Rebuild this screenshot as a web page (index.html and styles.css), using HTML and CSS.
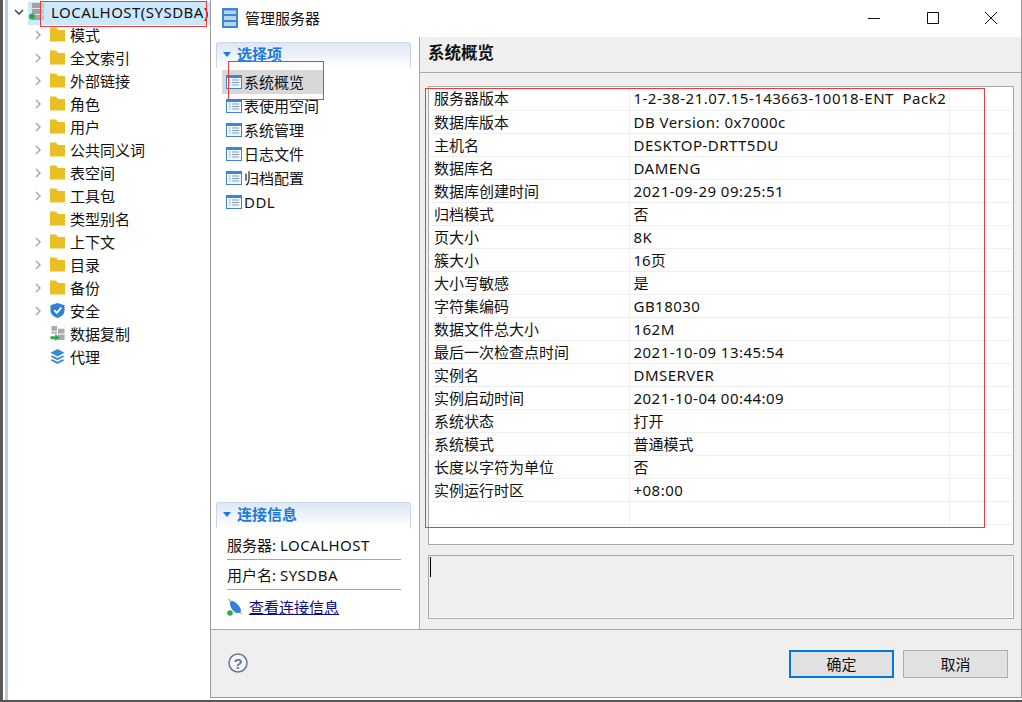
FILE: index.html
```html
<!DOCTYPE html>
<html lang="zh-CN">
<head>
<meta charset="utf-8">
<title>管理服务器</title>
<link rel="stylesheet" href="styles.css">
</head>
<body>
<svg class="defs" width="0" height="0" aria-hidden="true">
  <defs>
    <symbol id="folder" viewBox="0 0 15 14"><path d="M0 0H6L8 2.500H15V14H0Z" fill="#e8c024"/></symbol>
    <symbol id="chev" viewBox="0 0 6 10"><path d="M1 1L5 5L1 9" fill="none" stroke="#a8a8a8" stroke-width="1.500"/></symbol>
    <symbol id="list" viewBox="0 0 16 14"><path d="M0 0H16V14H0Z" fill="#3c87d4"/><path d="M1 3H15V13H1Z" fill="#f4f8fc"/><path d="M3 5H4.500M6 5H13M3 7.500H4.500M6 7.500H13M3 10H4.500M6 10H13" stroke="#7d9cc0" stroke-width="1"/></symbol>
  </defs>
</svg>
<div class="desktop">
  <aside class="tree">
    <div class="tree-row root">
      <svg class="twist-root" width="10" height="6" viewBox="0 0 10 6"><path d="M1 1L5 5L9 1" fill="none" stroke="#444" stroke-width="1.500"/></svg>
      <span class="root-label">
        <svg class="server" width="17" height="18" viewBox="0 0 17 18"><path d="M3 0H15V5H3ZM3 6H15V11H3ZM3 12H15V17H3Z" fill="#a3a3a3"/><path d="M11 0H15V5H11ZM11 6H15V11H11ZM11 12H15V17H11Z" fill="#c4c4c4"/><circle cx="3" cy="13.500" r="3" fill="#2fa84f"/></svg>
        <span class="lat">LOCALHOST(SYSDBA)</span>
      </span>
    </div>
    <div class="tree-row"><svg class="chev"><use href="#chev"/></svg><svg class="ico"><use href="#folder"/></svg><span>模式</span></div>
    <div class="tree-row"><svg class="chev"><use href="#chev"/></svg><svg class="ico"><use href="#folder"/></svg><span>全文索引</span></div>
    <div class="tree-row"><svg class="chev"><use href="#chev"/></svg><svg class="ico"><use href="#folder"/></svg><span>外部链接</span></div>
    <div class="tree-row"><svg class="chev"><use href="#chev"/></svg><svg class="ico"><use href="#folder"/></svg><span>角色</span></div>
    <div class="tree-row"><svg class="chev"><use href="#chev"/></svg><svg class="ico"><use href="#folder"/></svg><span>用户</span></div>
    <div class="tree-row"><svg class="chev"><use href="#chev"/></svg><svg class="ico"><use href="#folder"/></svg><span>公共同义词</span></div>
    <div class="tree-row"><svg class="chev"><use href="#chev"/></svg><svg class="ico"><use href="#folder"/></svg><span>表空间</span></div>
    <div class="tree-row"><svg class="chev"><use href="#chev"/></svg><svg class="ico"><use href="#folder"/></svg><span>工具包</span></div>
    <div class="tree-row"><i class="chev"></i><svg class="ico"><use href="#folder"/></svg><span>类型别名</span></div>
    <div class="tree-row"><svg class="chev"><use href="#chev"/></svg><svg class="ico"><use href="#folder"/></svg><span>上下文</span></div>
    <div class="tree-row"><svg class="chev"><use href="#chev"/></svg><svg class="ico"><use href="#folder"/></svg><span>目录</span></div>
    <div class="tree-row"><svg class="chev"><use href="#chev"/></svg><svg class="ico"><use href="#folder"/></svg><span>备份</span></div>
    <div class="tree-row"><svg class="chev"><use href="#chev"/></svg>
      <svg class="ico" viewBox="0 0 15 16"><path d="M7.500 0L15 2.500V8C15 12 11.500 14.500 7.500 16C3.500 14.500 0 12 0 8V2.500Z" fill="#2f80d8"/><path d="M4 7.500L6.800 10.500L11.500 5" fill="none" stroke="#fff" stroke-width="2"/></svg>
      <span>安全</span></div>
    <div class="tree-row"><i class="chev"></i>
      <svg class="ico" viewBox="0 0 15 16"><path d="M1 0H7V5H1ZM8 3H15V8H8ZM1 6H7V8H1ZM8 9H15V15H8Z" fill="#a9a9a9"/><path d="M0 11H5V8.500L10 12.500L5 16V14H0Z" fill="#2fa84f"/></svg>
      <span>数据复制</span></div>
    <div class="tree-row"><i class="chev"></i>
      <svg class="ico" viewBox="0 0 15 16"><path d="M7.500 0L15 4L7.500 8L0 4Z" fill="#3b8ad8"/><path d="M2 6.800L7.500 9.700L13 6.800L15 8L7.500 12L0 8Z" fill="#3b8ad8"/><path d="M2 10.800L7.500 13.700L13 10.800L15 12L7.500 16L0 12Z" fill="#3b8ad8"/></svg>
      <span>代理</span></div>
  </aside>

  <section class="dialog">
    <header class="titlebar">
      <svg class="title-icon" width="16" height="20" viewBox="0 0 16 20"><path d="M0 0H16V20H0Z" fill="#3c87d4"/><path d="M2 2.500H14V6H2ZM2 8H14V12H2ZM2 14H14V18H2Z" fill="#b9d3ee"/></svg>
      <span class="title-text">管理服务器</span>
      <div class="win-controls">
        <svg class="win-btn" width="12" height="12" viewBox="0 0 12 12"><path d="M0 6.500H12" stroke="#111"/></svg>
        <svg class="win-btn" width="12" height="12" viewBox="0 0 12 12"><path d="M.5 .5H11.500V11.500H.5Z" fill="none" stroke="#111"/></svg>
        <svg class="win-btn" width="12" height="12" viewBox="0 0 12 12"><path d="M0 0L12 12M12 0L0 12" stroke="#111"/></svg>
      </div>
    </header>

    <div class="dialog-body">
      <nav class="sidebar">
        <div class="sect-head">
          <svg class="tri" width="8" height="5" viewBox="0 0 8 5"><path d="M0 0H8L4 5Z" fill="#1a7ae0"/></svg>
          <span>选择项</span>
        </div>
        <ul class="options">
          <li class="option selected"><svg class="list-ico"><use href="#list"/></svg><span>系统概览</span></li>
          <li class="option"><svg class="list-ico"><use href="#list"/></svg><span>表使用空间</span></li>
          <li class="option"><svg class="list-ico"><use href="#list"/></svg><span>系统管理</span></li>
          <li class="option"><svg class="list-ico"><use href="#list"/></svg><span>日志文件</span></li>
          <li class="option"><svg class="list-ico"><use href="#list"/></svg><span>归档配置</span></li>
          <li class="option"><svg class="list-ico"><use href="#list"/></svg><span class="lat">DDL</span></li>
        </ul>
        <div class="sect-head conn-head">
          <svg class="tri" width="8" height="5" viewBox="0 0 8 5"><path d="M0 0H8L4 5Z" fill="#1a7ae0"/></svg>
          <span>连接信息</span>
        </div>
        <div class="conn-line conn-first">服务器: <span class="lat">LOCALHOST</span></div>
        <div class="conn-line">用户名: <span class="lat">SYSDBA</span></div>
        <div class="conn-link">
          <svg width="16" height="17" viewBox="0 0 16 17"><path d="M1 0L5 3M10 12L15 15" stroke="#8fb4d8" stroke-width="1.200"/><path d="M5 2C8 2 14 8 14 11.500C14 13.500 12 14 10 14C6 13 3 8 3 4C3 3 4 2 5 2Z" fill="#2f80d8"/><circle cx="3" cy="14" r="2.800" fill="#2fa84f"/></svg>
          <a href="#">查看连接信息</a>
        </div>
      </nav>

      <main class="content">
        <h1 class="content-title">系统概览</h1>
        <div class="table-box">
          <table class="grid">
            <tbody>
              <tr><td>服务器版本</td><td class="val lat">1-2-38-21.07.15-143663-10018-ENT&nbsp; Pack2</td><td></td></tr>
              <tr><td>数据库版本</td><td class="val lat">DB Version: 0x7000c</td><td></td></tr>
              <tr><td>主机名</td><td class="val lat">DESKTOP-DRTT5DU</td><td></td></tr>
              <tr><td>数据库名</td><td class="val lat">DAMENG</td><td></td></tr>
              <tr><td>数据库创建时间</td><td class="val lat">2021-09-29 09:25:51</td><td></td></tr>
              <tr><td>归档模式</td><td class="val">否</td><td></td></tr>
              <tr><td>页大小</td><td class="val lat">8K</td><td></td></tr>
              <tr><td>簇大小</td><td class="val">16页</td><td></td></tr>
              <tr><td>大小写敏感</td><td class="val">是</td><td></td></tr>
              <tr><td>字符集编码</td><td class="val lat">GB18030</td><td></td></tr>
              <tr><td>数据文件总大小</td><td class="val lat">162M</td><td></td></tr>
              <tr><td>最后一次检查点时间</td><td class="val lat">2021-10-09 13:45:54</td><td></td></tr>
              <tr><td>实例名</td><td class="val lat">DMSERVER</td><td></td></tr>
              <tr><td>实例启动时间</td><td class="val lat">2021-10-04 00:44:09</td><td></td></tr>
              <tr><td>系统状态</td><td class="val">打开</td><td></td></tr>
              <tr><td>系统模式</td><td class="val">普通模式</td><td></td></tr>
              <tr><td>长度以字符为单位</td><td class="val">否</td><td></td></tr>
              <tr><td>实例运行时区</td><td class="val lat">+08:00</td><td></td></tr>
              <tr><td></td><td></td><td></td></tr>
            </tbody>
          </table>
        </div>
        <div class="detail-box"><i class="caret"></i></div>
      </main>
    </div>

    <footer class="footer">
      <svg class="help" width="20" height="20" viewBox="0 0 20 20"><circle cx="10" cy="10" r="9" fill="#f4f4f6" stroke="#66789a" stroke-width="1.500"/><text x="10" y="15.500" text-anchor="middle" class="help-q">?</text></svg>
      <button class="btn primary" type="button">确定</button>
      <button class="btn" type="button">取消</button>
    </footer>
  </section>

  <div class="mark mark-root"></div>
  <div class="mark mark-option"></div>
  <div class="mark mark-table"></div>
</div>
<div class="taskbar-strip"></div>
</body>
</html>
```
FILE: styles.css
```css
* { box-sizing: border-box; }
html, body { margin: 0; padding: 0; }
body {
  width: 1022px;
  height: 702px;
  overflow: hidden;
  background: #fff;
  color: #111;
  font: 15px/20px "Noto Sans", "Noto Sans CJK SC", sans-serif;
}
.defs { position: absolute; }
.desktop { position: relative; display: flex; height: 700px; }
.taskbar-strip { height: 2px; background: #555; }
.lat { letter-spacing: .47px; }

/* object tree */
.tree {
  width: 210px;
  padding-top: 2px;
  border-left: 3px solid #595959;
  background: linear-gradient(90deg, #fff 0 2px, #b9cde0 2px 5px, #fff 5px);
}
.tree-row { display: flex; align-items: center; height: 23px; padding-left: 32px; white-space: nowrap; }
.tree-row .chev { display: block; flex: none; width: 6px; height: 10px; margin-right: 9px; }
.tree-row .ico { flex: none; width: 15px; height: 15px; margin-right: 5px; }
.root { padding-left: 11px; margin-bottom: -2px; }
.twist-root { flex: none; margin: -3px 5px 0 0; }
.root-label { display: flex; align-items: center; flex: 1; height: 23px; padding: 0 0 3px 1px; background: #cce8ff; margin-left: -1px; margin-right: -1px; overflow: hidden; }
.server { flex: none; margin-right: 5px; }

/* dialog */
.dialog {
  flex: 1;
  display: flex;
  flex-direction: column;
  height: 698px;
  border-left: 1px solid #9b9b9b;
  border-right: 1px solid #9b9b9b;
  border-bottom: 1px solid #9b9b9b;
  background: #fff;
}
.titlebar { display: flex; align-items: center; height: 37px; flex: none; padding: 0 0 2px 11px; }
.title-text { margin-left: 7px; }
.title-icon { flex: none; }
.win-controls { display: flex; gap: 46.500px; margin-left: auto; margin-right: 24px; }
.win-btn { display: block; }

.dialog-body { display: flex; height: 593px; flex: none; border-bottom: 1px solid #a9a9a9; }

.sidebar { width: 208px; flex: none; padding: 5px 8px 0 5px; display: flex; flex-direction: column; }
.sect-head {
  display: flex;
  align-items: center;
  gap: 6px;
  height: 26px;
  flex: none;
  padding: 0 0 3px 6px;
  border: 1px solid #c8d8e8;
  border-bottom: 0;
  border-radius: 3px 3px 0 0;
  background: linear-gradient(#dde7f3, #fff);
  color: #1a7ae0;
  font-size: 15px;
  font-weight: 700;
}
.options { list-style: none; margin: 2px 0 0; padding: 0 0 0 6px; }
.option { display: flex; align-items: center; height: 24px; padding-left: 4px; }
.list-ico { flex: none; width: 16px; height: 14px; margin-right: 2px; }
.selected { background: #d8d8d8; width: 101px; }
.conn-head { margin-top: auto; }
.conn-line { margin: 0 10px 0 11px; height: 30px; line-height: 30px; border-bottom: 1px solid #a6a6a6; white-space: nowrap; }
.conn-first { height: 32px; line-height: 34px; }
.conn-link { display: flex; align-items: center; gap: 6px; height: 34px; margin: 0 0 5px 11px; }
.conn-link a { color: #0a0a8c; }

.content { flex: 1; display: flex; flex-direction: column; border-left: 1px solid #a9a9a9; background: #efefef; padding-bottom: 10px; }
.content-title {
  height: 36px;
  flex: none;
  margin: 0;
  padding: 5px 0 0 8px;
  border-bottom: 1px solid #a9a9a9;
  font-size: 16.500px;
  line-height: 21px;
  font-weight: 700;
}
.table-box {
  flex: none;
  height: 459px;
  margin: 13px 7px 0 8px;
  border: 1px solid #a9a9a9;
  background: #fff;
  overflow: hidden;
}
.grid { width: 100%; table-layout: fixed; border-collapse: collapse; }
.grid td { height: 23px; padding: 0 0 0 5px; border-bottom: 1px solid #efefef; border-right: 1px solid #efefef; line-height: 20px; white-space: nowrap; }
.grid td:nth-child(1) { width: 200px; }
.grid td:nth-child(2) { width: 320px; }
.grid td:nth-child(3) { border-right: 0; }
.grid .val { padding-left: 4px; overflow: visible; }

.detail-box { flex: 1; margin: 10px 7px 0 8px; border: 1px solid #a9a9a9; box-shadow: inset -1px -1px 0 #fff; padding: 1px; }
.caret { display: block; width: 1px; height: 20px; background: #000; }

.footer { flex: 1; display: flex; align-items: center; background: #efefef; padding: 0 13px 0 17px; gap: 9px; }
.help { margin: 0 auto 2px 0; }
.help-q { font: 700 15px "Liberation Sans", sans-serif; fill: #66789a; }
.btn {
  width: 105px;
  height: 28px;
  padding: 0;
  border: 1px solid #adadad;
  background: #e1e1e1;
  color: #111;
  font: inherit;
}
.primary { border: 2px solid #0078d7; }

/* annotation rectangles drawn over the screenshot */
.mark { position: absolute; border: 1px solid #f03a3a; pointer-events: none; }
.mark-root { left: 40px; top: 1px; width: 167px; height: 26px; }
.mark-option { left: 228px; top: 61px; width: 96px; height: 39px; }
.mark-table { left: 425px; top: 88px; width: 560px; height: 440px; }
```
